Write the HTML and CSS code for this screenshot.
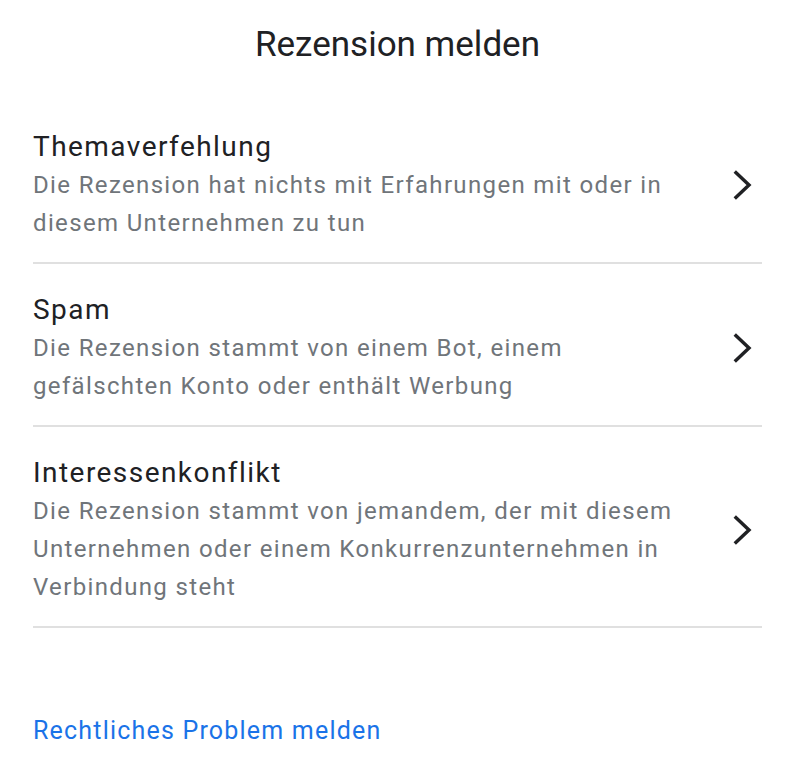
FILE: index.html
```html
<!DOCTYPE html>
<html lang="de">

<head>
    <meta charset="utf-8">
    <meta name="viewport" content="width=device-width, initial-scale=1.0">
    <title>Rezension melden</title>
    <link rel="stylesheet" href="styles.css">
</head>

<body>
    <main class="dialog">
        <h1 class="titel">Rezension melden</h1>

        <section class="liste">
            <article class="grund">
                <div class="tekst">
                    <h2>Themaverfehlung</h2>
                    <p>Die Rezension hat nichts mit Erfahrungen mit oder in diesem Unternehmen zu tun</p>
                </div>
                <svg class="pil" viewBox="0 0 24 24"><path d="M8.5 3 18 12l-9.5 9"/></svg>
            </article>
            <article class="grund">
                <div class="tekst">
                    <h2>Spam</h2>
                    <p>Die Rezension stammt von einem Bot, einem gefälschten Konto oder enthält Werbung</p>
                </div>
                <svg class="pil" viewBox="0 0 24 24"><path d="M8.5 3 18 12l-9.5 9"/></svg>
            </article>
            <article class="grund">
                <div class="tekst">
                    <h2>Interessenkonflikt</h2>
                    <p>Die Rezension stammt von jemandem, der mit diesem Unternehmen oder einem Konkurrenzunternehmen in Verbindung steht</p>
                </div>
                <svg class="pil" viewBox="0 0 24 24"><path d="M8.5 3 18 12l-9.5 9"/></svg>
            </article>
        </section>

        <a class="link" href="#">Rechtliches Problem melden</a>
    </main>
</body></html>
```

FILE: styles.css
```css
body {
    margin: 0;
    font-family: Roboto, "Liberation Sans", sans-serif;
    background: #fff;
}

.dialog {
    padding: 0 38px 0 33px;
}

.titel {
    margin: 0;
    padding-top: 24px;
    height: 77px;
    font-size: 35px;
    font-weight: 400;
    line-height: 42px;
    text-align: center;
    color: #202124;
    box-sizing: content-box;
}

.grund {
    display: flex;
    align-items: center;
    padding: 27px 0 20px;
    border-bottom: 2px solid #e0e0e0;
    cursor: pointer;
}

.tekst {
    flex: 1;
}

.grund h2 {
    margin: 0;
    font-size: 28px;
    font-weight: 400;
    line-height: 38px;
    letter-spacing: 1.45px;
    color: #202124;
}

.grund p {
    margin: 0;
    max-width: 655px;
    font-size: 24px;
    line-height: 38px;
    letter-spacing: 1.35px;
    color: #70757a;
}

.pil {
    width: 36px;
    height: 36px;
    margin-right: 4px;
    flex-shrink: 0;
    fill: none;
    stroke: #202124;
    stroke-width: 2.3;
}

.link {
    display: block;
    margin-top: 85px;
    font-size: 25px;
    line-height: 36px;
    letter-spacing: 1.2px;
    color: #1a73e8;
    text-decoration: none;
}
```
